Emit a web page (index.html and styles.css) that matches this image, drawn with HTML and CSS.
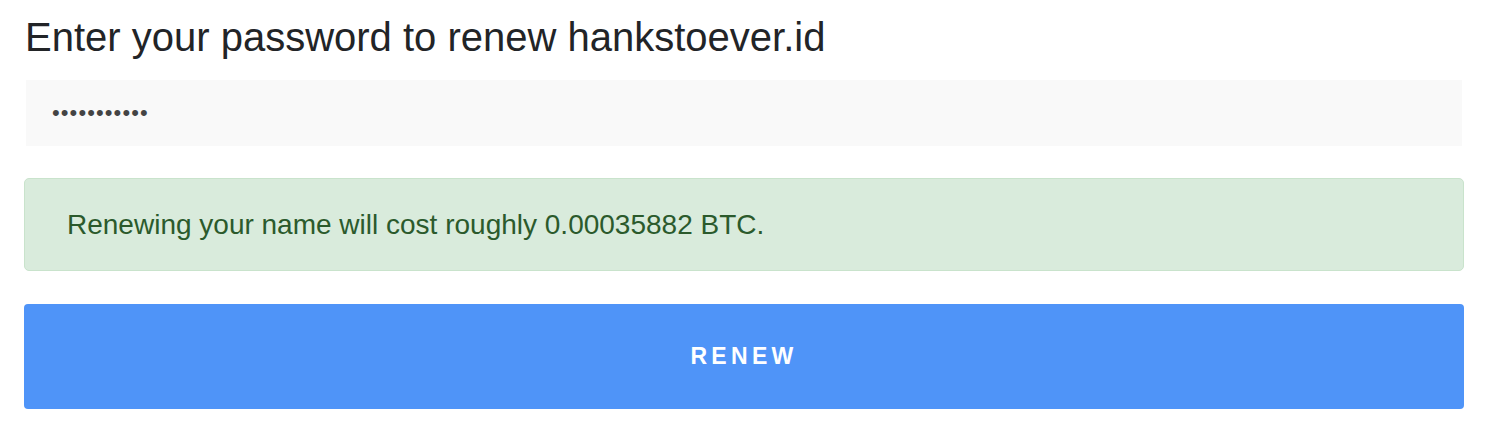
FILE: index.html
```html
<!DOCTYPE html>
<html lang="en">
<head>
<meta charset="utf-8">
<title>Renew name</title>
<link rel="stylesheet" href="styles.css">
</head>
<body>
<main class="renew">
  <h1 class="renew-title">Enter your password to renew hankstoever.id</h1>
  <input class="renew-password" type="password" value="hunter2pass" aria-label="Password">
  <div class="renew-alert">Renewing your name will cost roughly 0.00035882 BTC.</div>
  <button class="renew-button" type="button">RENEW</button>
</main>
</body>
</html>
```

FILE: styles.css
```css
html, body {
  margin: 0;
  padding: 0;
  background: #ffffff;
}

body {
  font-family: "Liberation Sans", Arial, Helvetica, sans-serif;
  color: #222427;
}

.renew {
  width: 1440px;
  padding: 0 0 0 24px;
  display: flex;
  flex-direction: column;
}

.renew-title {
  margin: 14px 0 0 1px;
  font-size: 40px;
  font-weight: 400;
  line-height: 46px;
  color: #222427;
}

.renew-password {
  box-sizing: border-box;
  margin: 20px 2px 0;
  height: 66px;
  border: none;
  outline: none;
  background: #f9f9f9;
  padding: 0 26px;
  font-family: "Liberation Sans", Arial, sans-serif;
  font-size: 22px;
  color: #444444;
  letter-spacing: 1.1px;
}

.renew-alert {
  box-sizing: border-box;
  margin-top: 32px;
  height: 93px;
  border: 1px solid #c9e3cc;
  border-radius: 5px;
  background: #d9ebdc;
  color: #2b5a2c;
  font-size: 28px;
  padding: 0 42px;
  display: flex;
  align-items: center;
}

.renew-button {
  margin-top: 33px;
  height: 105px;
  border: none;
  border-radius: 4px;
  background: #4f94f8;
  color: #ffffff;
  font-family: "Liberation Sans", Arial, sans-serif;
  font-size: 23px;
  font-weight: 700;
  letter-spacing: 4.3px;
  cursor: pointer;
}
```
